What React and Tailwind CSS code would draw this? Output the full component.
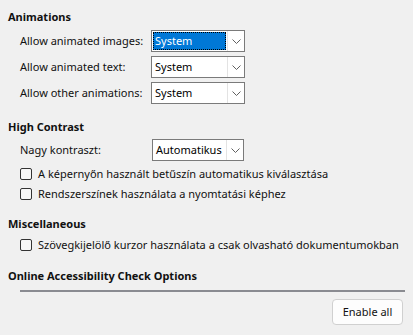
function Chevron() {
  return (
    <svg width="9" height="5" viewBox="0 0 9 5" className="text-[#606060]">
      <path d="M0.5 0.5 L4.5 4.5 L8.5 0.5" fill="none" stroke="currentColor" strokeWidth="1" />
    </svg>
  )
}

function Select({ value, width = 'w-[94px]', focused = false }) {
  return (
    <div className={`flex h-[22px] ${width} shrink-0 border border-[#7a7a7a] bg-white`}>
      <div className="flex flex-1 p-px">
        <div
          className={
            focused
              ? 'flex flex-1 items-center border border-dotted border-black bg-[#0078d7] pl-px text-white'
              : 'flex flex-1 items-center pl-[2px] text-black'
          }
        >
          {value}
        </div>
      </div>
      <div className="flex w-[17px] items-center justify-center border-l border-[#e3e3e3]">
        <Chevron />
      </div>
    </div>
  )
}

function Checkbox({ label }) {
  return (
    <div className="flex h-5 items-center pl-3">
      <div className="h-[12px] w-[12px] shrink-0 rounded-[2px] border border-[#333] bg-[#f7f7f7]" />
      <span className="ml-[6px]">{label}</span>
    </div>
  )
}

function Heading({ children, className = '' }) {
  return <div className={`flex h-5 items-center font-bold ${className}`}>{children}</div>
}

function Row({ label, children, className = '' }) {
  return (
    <div className={`flex h-[22px] items-center pl-3 ${className}`}>
      <span className="w-[131px] shrink-0">{label}</span>
      {children}
    </div>
  )
}

export default function App() {
  return (
    <div className="flex h-[335px] w-[413px] flex-col overflow-hidden whitespace-nowrap bg-[#f0f0f0] pl-2 pr-2 pt-[7px] text-[11px] text-[#111] font-['Noto_Sans',sans-serif]">
      {/* Animations */}
      <Heading>Animations</Heading>
      <div className="mt-[3px] flex flex-col gap-1">
        <Row label="Allow animated images:">
          <Select value="System" focused />
        </Row>
        <Row label="Allow animated text:">
          <Select value="System" />
        </Row>
        <Row label="Allow other animations:">
          <Select value="System" />
        </Row>
      </div>

      {/* High Contrast */}
      <Heading className="mt-[13px]">High Contrast</Heading>
      <Row label="Nagy kontraszt:" className="mt-[2px]">
        <div className="ml-px">
          <Select value="Automatikus" width="w-[92px]" />
        </div>
      </Row>
      <div className="mt-[3px]">
        <Checkbox label="A képernyőn használt betűszín automatikus kiválasztása" />
        <Checkbox label="Rendszerszínek használata a nyomtatási képhez" />
      </div>

      {/* Miscellaneous */}
      <Heading className="mt-[10px]">Miscellaneous</Heading>
      <div className="mt-px">
        <Checkbox label="Szövegkijelölő kurzor használata a csak olvasható dokumentumokban" />
      </div>

      {/* Online check */}
      <Heading className="mt-[11px]">Online Accessibility Check Options</Heading>
      <div className="ml-3 mt-1 h-[2px] shrink-0 bg-[#8a8b91]" />
      <div className="mt-[7px] flex justify-end pr-[2px]">
        <button className="h-[26px] w-[71px] rounded-[4px] border border-[#d0d0d0] bg-[#fdfdfd] text-[11px] text-[#111]">
          Enable all
        </button>
      </div>
    </div>
  )
}
